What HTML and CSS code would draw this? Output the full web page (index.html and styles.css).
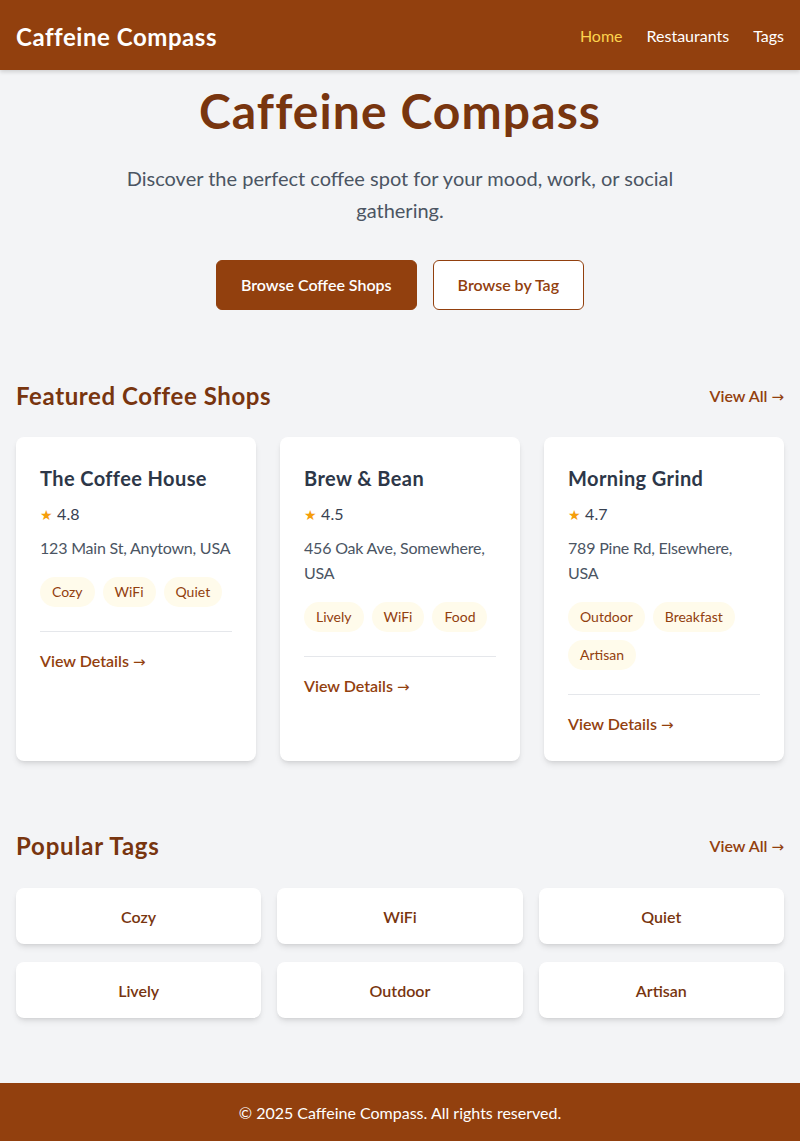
FILE: index.html
```html
<!DOCTYPE html>
<html lang="en">
<head>
<meta charset="utf-8">
<title>Caffeine Compass</title>
<link rel="stylesheet" href="styles.css">
</head>
<body>
<header class="topbar">
  <a class="brand" href="#">Caffeine Compass</a>
  <nav class="nav">
    <a class="nav-link active" href="#">Home</a>
    <a class="nav-link" href="#">Restaurants</a>
    <a class="nav-link" href="#">Tags</a>
  </nav>
</header>

<main class="main">
  <section class="hero">
    <h1 class="hero-title">Caffeine Compass</h1>
    <p class="hero-text">Discover the perfect coffee spot for your mood, work, or social gathering.</p>
    <div class="hero-actions">
      <a class="btn btn-primary" href="#">Browse Coffee Shops</a>
      <a class="btn btn-outline" href="#">Browse by Tag</a>
    </div>
  </section>

  <section class="section">
    <div class="section-head">
      <h2 class="section-title">Featured Coffee Shops</h2>
      <a class="view-all" href="#">View All <span class="arr">→</span></a>
    </div>
    <div class="cards">
      <article class="card">
        <h3 class="card-title">The Coffee House</h3>
        <div class="rating"><span class="star">★</span> 4.8</div>
        <p class="address">123 Main St, Anytown, USA</p>
        <div class="tags">
          <span class="tag">Cozy</span><span class="tag">WiFi</span><span class="tag">Quiet</span>
        </div>
        <div class="card-foot"><a class="details" href="#">View Details <span class="arr">→</span></a></div>
      </article>
      <article class="card">
        <h3 class="card-title">Brew &amp; Bean</h3>
        <div class="rating"><span class="star">★</span> 4.5</div>
        <p class="address">456 Oak Ave, Somewhere, USA</p>
        <div class="tags">
          <span class="tag">Lively</span><span class="tag">WiFi</span><span class="tag">Food</span>
        </div>
        <div class="card-foot"><a class="details" href="#">View Details <span class="arr">→</span></a></div>
      </article>
      <article class="card">
        <h3 class="card-title">Morning Grind</h3>
        <div class="rating"><span class="star">★</span> 4.7</div>
        <p class="address">789 Pine Rd, Elsewhere, USA</p>
        <div class="tags">
          <span class="tag">Outdoor</span><span class="tag">Breakfast</span><span class="tag">Artisan</span>
        </div>
        <div class="card-foot"><a class="details" href="#">View Details <span class="arr">→</span></a></div>
      </article>
    </div>
  </section>

  <section class="section section-tags">
    <div class="section-head">
      <h2 class="section-title">Popular Tags</h2>
      <a class="view-all" href="#">View All <span class="arr">→</span></a>
    </div>
    <div class="tag-grid">
      <a class="tag-tile" href="#">Cozy</a>
      <a class="tag-tile" href="#">WiFi</a>
      <a class="tag-tile" href="#">Quiet</a>
      <a class="tag-tile" href="#">Lively</a>
      <a class="tag-tile" href="#">Outdoor</a>
      <a class="tag-tile" href="#">Artisan</a>
    </div>
  </section>
</main>

<footer class="footer">© 2025 Caffeine Compass. All rights reserved.</footer>
</body>
</html>
```

FILE: styles.css
```css
* { box-sizing: border-box; }
html, body { margin: 0; padding: 0; }
body {
  font-family: "Lato", "Open Sans", sans-serif;
  background: #f3f4f6;
  color: #1f2937;
}
a { text-decoration: none; }
.arr {
  font-family: "DejaVu Sans", sans-serif;
  font-weight: 400;
  font-size: 15px;
}

.topbar {
  height: 70px;
  background: #92400e;
  display: flex;
  align-items: center;
  justify-content: space-between;
  padding: 0 16px;
  box-shadow: 0 2px 4px rgba(0,0,0,0.15);
}
.brand {
  color: #fff;
  font-size: 24px;
  font-weight: 700;
  letter-spacing: 0.55px;
  margin-top: 2px;
}
.nav { display: flex; gap: 24px; }
.nav-link { color: #fff; font-size: 16px; }
.nav-link.active { color: #fcd34d; }

.main { padding: 0 16px; }

.hero {
  text-align: center;
  padding-top: 15px;
}
.hero-title {
  margin: 0;
  font-size: 48px;
  line-height: 52px;
  font-weight: 700;
  letter-spacing: 1.1px;
  color: #78350f;
}
.hero-text {
  max-width: 576px;
  margin: 25px auto 0;
  font-size: 20px;
  line-height: 32px;
  color: #4b5563;
}
.hero-actions {
  margin-top: 34px;
  display: flex;
  justify-content: center;
  gap: 16px;
}
.btn {
  display: inline-block;
  padding: 12px 24px;
  font-size: 16px;
  line-height: 24px;
  font-weight: 600;
  border-radius: 6px;
}
.btn-primary { background: #92400e; color: #fff; border: 1px solid #92400e; }
.btn-outline { background: #fff; color: #92400e; border: 1px solid #92400e; }

.section { margin-top: 70px; }
.section-tags { margin-top: 69px; }
.section-head {
  display: flex;
  justify-content: space-between;
  align-items: center;
  margin-bottom: 25px;
}
.section-tags .section-head { margin-bottom: 26px; }
.section-title {
  margin: 0;
  font-size: 24px;
  line-height: 32px;
  font-weight: 700;
  letter-spacing: 0.6px;
  color: #78350f;
}
.section-tags .section-title { letter-spacing: 0.8px; }
.view-all { color: #92400e; font-weight: 600; font-size: 16px; }

.cards {
  display: grid;
  grid-template-columns: repeat(3, 1fr);
  gap: 24px;
}
.card {
  background: #fff;
  border-radius: 8px;
  padding: 24px;
  box-shadow: 0 4px 6px -1px rgba(0,0,0,0.1), 0 2px 4px -2px rgba(0,0,0,0.1);
}
.card-title {
  margin: 0;
  font-size: 20px;
  line-height: 34px;
  font-weight: 700;
  letter-spacing: 0.4px;
  color: #2d3748;
}
.rating {
  margin-top: 8px;
  font-size: 16px;
  line-height: 22px;
  color: #374151;
}
.star { color: #f59e0b; font-size: 14px; }
.address {
  margin: 9px 0 0;
  font-size: 16px;
  line-height: 25px;
  letter-spacing: -0.2px;
  color: #4b5563;
}
.tags {
  margin-top: 17px;
  display: flex;
  flex-wrap: wrap;
  gap: 8px;
}
.tag {
  background: #fffbeb;
  color: #92400e;
  font-size: 14px;
  line-height: 20px;
  padding: 5px 12px;
  border-radius: 999px;
}
.card-foot {
  margin-top: 24px;
  border-top: 1px solid #e5e7eb;
  padding-top: 17px;
}
.details { color: #92400e; font-weight: 600; font-size: 16px; line-height: 24px; }

.tag-grid {
  display: grid;
  grid-template-columns: repeat(3, 1fr);
  gap: 18px 16px;
}
.tag-tile {
  background: #fff;
  border-radius: 8px;
  height: 56px;
  display: flex;
  align-items: center;
  justify-content: center;
  color: #78350f;
  font-weight: 600;
  font-size: 16px;
  box-shadow: 0 4px 6px -1px rgba(0,0,0,0.1), 0 2px 4px -2px rgba(0,0,0,0.1);
}

.footer {
  margin-top: 65px;
  background: #92400e;
  color: #fff;
  text-align: center;
  height: 58px;
  display: flex;
  align-items: center;
  justify-content: center;
  font-size: 16px;
}
```
